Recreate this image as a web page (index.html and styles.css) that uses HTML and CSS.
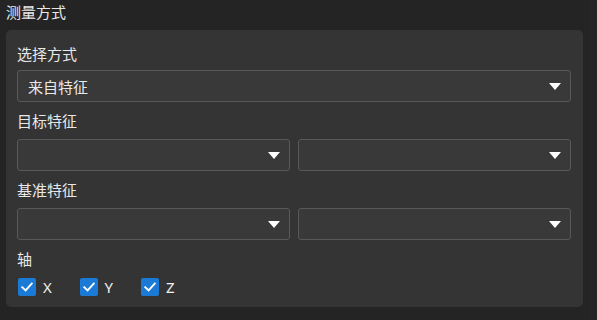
FILE: index.html
```html
<!DOCTYPE html>
<html lang="zh">
<head>
<meta charset="utf-8">
<link rel="stylesheet" href="styles.css">
</head>
<body>
<div class="page">
  <div class="title">测量方式</div>
  <div class="panel">
    <div class="label">选择方式</div>
    <div class="select"><span class="value">来自特征</span><span class="arrow"></span></div>
    <div class="label gap">目标特征</div>
    <div class="row">
      <div class="select"><span class="value"></span><span class="arrow"></span></div>
      <div class="select"><span class="value"></span><span class="arrow"></span></div>
    </div>
    <div class="label gap">基准特征</div>
    <div class="row">
      <div class="select"><span class="value"></span><span class="arrow"></span></div>
      <div class="select"><span class="value"></span><span class="arrow"></span></div>
    </div>
    <div class="label gap">轴</div>
    <div class="checks">
      <label class="check"><span class="box"><svg viewBox="0 0 18 18" width="18" height="18"><path d="M4.2 9.2 L7.6 12.4 L13.8 5.6" fill="none" stroke="#fff" stroke-width="1.8" stroke-linecap="square"/></svg></span><span class="ctext">X</span></label>
      <label class="check"><span class="box"><svg viewBox="0 0 18 18" width="18" height="18"><path d="M4.2 9.2 L7.6 12.4 L13.8 5.6" fill="none" stroke="#fff" stroke-width="1.8" stroke-linecap="square"/></svg></span><span class="ctext">Y</span></label>
      <label class="check"><span class="box"><svg viewBox="0 0 18 18" width="18" height="18"><path d="M4.2 9.2 L7.6 12.4 L13.8 5.6" fill="none" stroke="#fff" stroke-width="1.8" stroke-linecap="square"/></svg></span><span class="ctext">Z</span></label>
    </div>
  </div>
</div>
</body>
</html>
```
FILE: styles.css
```css
html, body {
  margin: 0;
  padding: 0;
  background: #232323;
  width: 597px;
  height: 320px;
  overflow: hidden;
}
.page {
  font-family: "Noto Sans CJK SC", "Noto Sans", sans-serif;
  color: #e8e8e8;
  font-size: 15px;
  width: 589px;
  height: 320px;
  background: #242424;
  border-right: 8px solid #262626;
}
.title {
  padding: 0 0 0 6px;
  height: 30px;
  line-height: 24px;
  font-size: 15px;
}
.panel {
  margin-left: 6px;
  width: 577px;
  height: 277px;
  box-sizing: border-box;
  background: #343434;
  border-radius: 5px;
  padding: 14px 12px 0 11px;
  display: flex;
  flex-direction: column;
}
.label {
  height: 20px;
  line-height: 20px;
  margin-bottom: 6px;
}
.label.gap {
  margin-top: 9px;
  margin-bottom: 8px;
}
.select {
  height: 32px;
  box-sizing: border-box;
  border: 1px solid #585858;
  border-radius: 3px;
  background: #393939;
  display: flex;
  align-items: center;
  padding: 0 9px 0 10px;
}
.value {
  flex: 1;
  font-size: 15px;
}
.arrow {
  width: 0;
  height: 0;
  border-left: 6px solid transparent;
  border-right: 6px solid transparent;
  border-top: 7px solid #ffffff;
}
.row {
  display: grid;
  grid-template-columns: 1fr 1fr;
  column-gap: 8px;
}
.checks {
  display: flex;
  align-items: center;
  margin-top: -2px;
  height: 24px;
}
.check {
  display: flex;
  align-items: center;
  width: 61.5px;
}
.box {
  width: 18px;
  height: 18px;
  border-radius: 2px;
  background: #1a7ad6;
  margin-left: 1px;
  display: block;
}
.box svg {
  display: block;
}
.ctext {
  margin-left: 7px;
  font-family: "Noto Sans", sans-serif;
  font-size: 15px;
  color: #f0f0f0;
}
```
